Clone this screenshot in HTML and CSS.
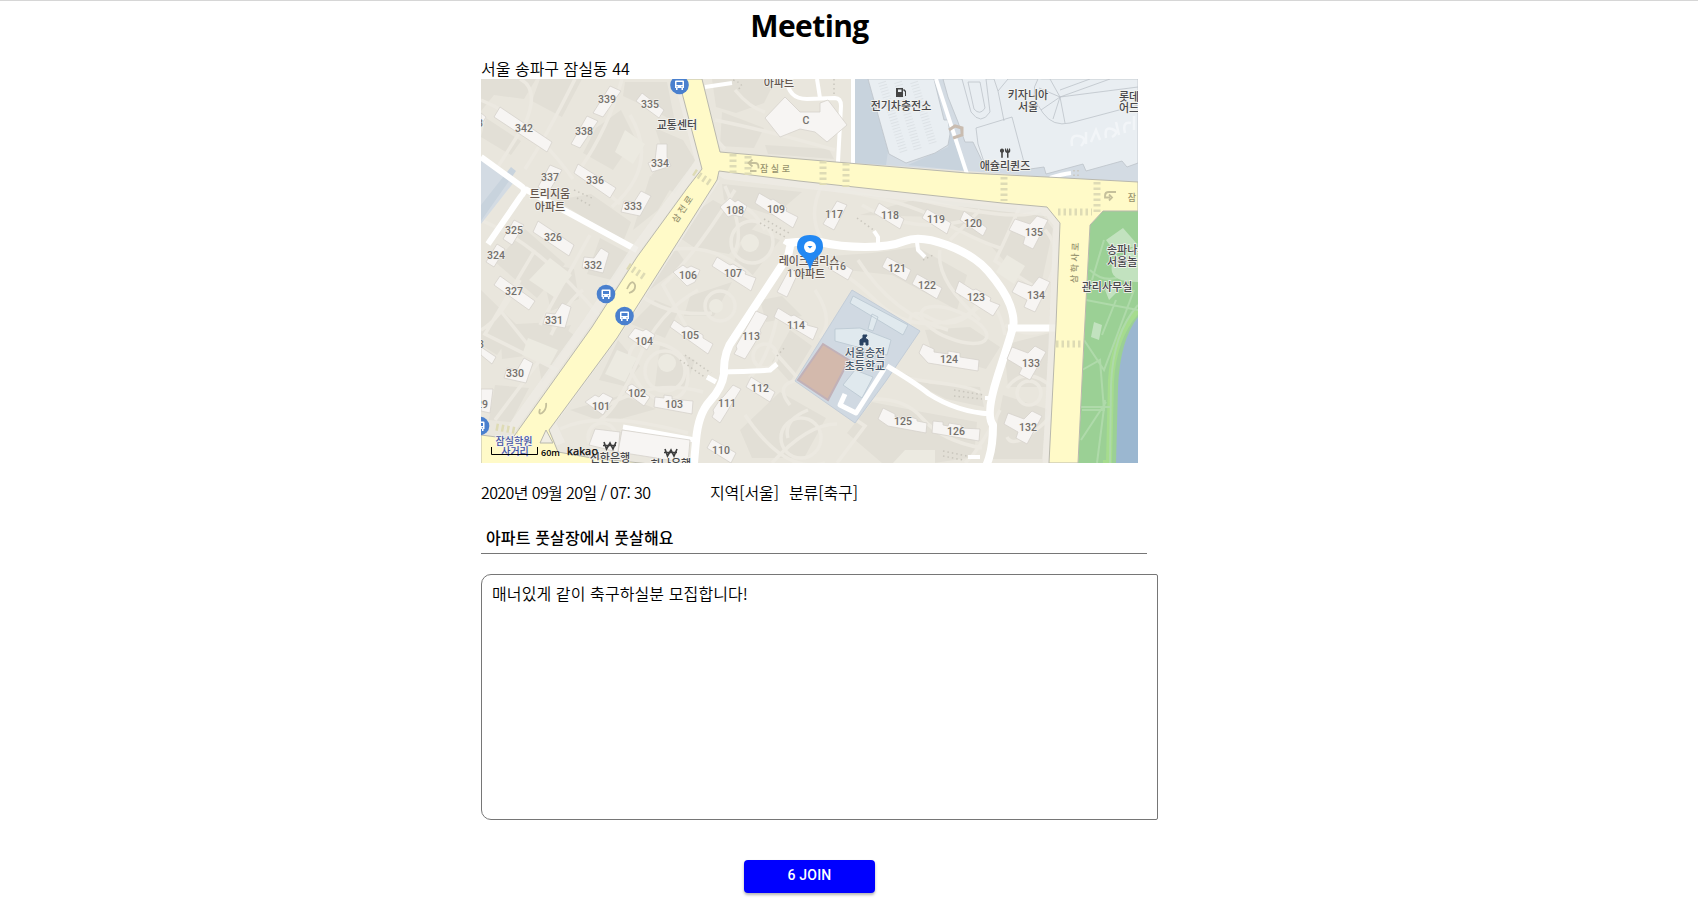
FILE: index.html
```html
<!DOCTYPE html>
<html lang="ko">
<head>
<meta charset="utf-8">
<title>Meeting</title>
<link rel="stylesheet" href="styles.css">
</head>
<body>
<main class="meeting">
  <h1 class="meeting-title">Meeting</h1>
  <p class="address">서울 송파구 잠실동 44</p>
  <svg class="map" viewBox="481 79 657 384" role="img" aria-label="지도">
    <rect class="ground" x="481" y="79" width="657" height="384"/>
    <!-- ground shading -->
    <g class="patch">
      <path d="M481 79h55l-12 20-30-4-13 16zM540 79h42l-20 38-30-16zM486 118l35 23-10 14-30-18zM596 128l25-18 14 28-22 32-30-17zM625 82h42l8 40-22-12-30-14zM655 128l28 12 12 20-20 34-24-18 14-18zM556 200l35-6 40 28-8 20zM650 176l22 10-14 24-25 20z"/>
      <path d="M495 262l30-33 40 35-28 34zM540 262l34 7 5 30-28 12zM600 238l30 16-18 26-25-6zM481 290l36 35-20 30-16-10zM500 325l54-3-14 32-38 5zM535 345l25-20 14 10-32 48zM495 385l34 3-18 34-22-2zM545 330l26-5-8 18zM668 230l45-30 44 24-28 30-34-6zM722 184l80 8-28 24-50-16zM640 268l32-25 14 20-38 28zM690 296l42-14-18 34-30 0zM655 300l24 10-14 28-34-14zM618 340l22 26-16 20-25-6zM660 345l35 15-10 30-30-4zM570 410l52-15 34 14-50 14z"/>
      <path d="M712 79h64l-12 24-28 10-20-6zM722 112l42 16-10 20-34-2zM765 145l64 4 5 10-66-5zM748 228l32 12-28 36-20-10zM760 300l22-4 20 20-36 6zM790 330l22 16-22 36-18-20zM740 430l40-38 46 26-22 40h-52zM860 215l60-17 120 13 13 18-15 70-48-54-52-28zM830 256l42-3 45-6 50 28-10 35-65-35-45-5zM925 330l45-3 30 20-14 22-54-16zM895 370l35 14 50 3 4 20-38-8-40-20zM872 402l50 10 55 10-3 35-40 6h-52l-35-30zM1004 345l46-12-4 54-38 0zM1003 395l44 14-5 50h-52z"/>
    </g>
    <g class="footpath">
      <path d="M481 100q50 20 92 79M520 79q20 10 5 45l-38 60M575 79q-30 60-50 90M622 79q-14 50-42 90l40 35M630 115q30 50-18 92M481 220q60 25 122 100M520 280q-20 40-39 50M535 250l-50 84 72 36M590 235l-50 90M500 310l40 50-45 60M583 290q-15 10-32 45M695 79q0 40 30 70M715 120q50 10 120 30M735 90q15 18 30 22"/>
      <path d="M735 190q-40 65-72 95l25 45M668 250q50-8 85 28M725 186q20 45 10 65M765 230q-20-35-42-23M698 290q-40 22-60 70t-38 60M640 295q30 22 72 18M628 365q0-30 30-22t30 32-22 25-38-35M603 408q50-30 100-16M560 429q40-20 128 4M745 415q40 60 80 48M777 318q-10 45-28 60M773 350l30 34 62 42-28 37M790 405q-20-25 20-26M837 424q-30 0-65 39M808 410q-25 10-20 28"/>
      <path d="M822 185q-15 30 0 55M835 190q70 10 105 30t60 28M862 205q50 30 105 15M900 195q120 30 140 15M980 210q-20 20-30 30M1020 206q-15 35-25 55l52 34M1045 230q20 20 0 60M815 260q30 10 60 40t70 22 30-30M815 290q20 30 5 48M858 260q35 55 90 70M940 250q-5 30 40 70M900 345q-25 30 25 36t55 12M862 400q40-5 60 18t60 30M910 330q-4-25 20-12t45-8 30 25M1007 388q16-22 40-5t-5 42-35 12M1000 410q-20 40-35 53M1005 325q25 15 48 2"/>
      <circle cx="752" cy="242" r="21"/><circle cx="720" cy="306" r="15"/><circle cx="765" cy="356" r="12"/><circle cx="665" cy="371" r="20"/><circle cx="602" cy="437" r="14"/><circle cx="1029" cy="393" r="12"/><circle cx="801" cy="438" r="20"/>
      <ellipse cx="954" cy="325" rx="35" ry="14" transform="rotate(22 954 325)"/>
    </g>
    <g class="knoll">
      <path d="M550 258l22 17-18 22-25-17zM528 338l30 12-8 15-28-10zM617 350l20 8-12 24-20-8zM1007 255l18 11-11 18-18-12zM905 450h30v13h-42zM625 130l20 14-12 20-18-12z"/>
      <circle cx="716" cy="306" r="7"/><circle cx="667" cy="363" r="9"/><circle cx="750" cy="243" r="9"/>
    </g>

    <!-- commercial district and station block on the left edge -->
    <path class="lot" d="M854 79h284v104l-90-6-194-14zM481 158l33 24-33 42z"/>
    <path class="lot-shade" d="M855 79h13l20 72-2 14-31-2zM935 153l13-6 2-16 16 40-58-6zM481 205l30-38 5 4-35 50z"/>
    <g class="mall">
      <path d="M868 79h66l10 41h4l2 14-2 11-13 8-29 10-17-9z"/>
      <path d="M943 79h195v84l-11 4-5-6-36 10-3-7-37 10-2-7-14 2-46-4-11-23-8 0-7-20-10-25z"/>
      <path d="M976 128l36-11 13 49-41-4-6-18z"/>
      <path d="M962 79l9 33q10 14 19 0l-4-33M968 82h12l5 26q-5 8-11 1zM994 79l4 12 10-12M998 91l6 30"/>
      <path d="M1038 79q-10 15 5 34 10 14 27 10l68-18M1060 97l-21-9M1060 97l-19 13M1060 97l-7 22M1060 97l5 26M1060 97l50-18M1060 97l78-10M1060 97l-10-18M1060 90l30-11"/>
    </g>
    <g class="stalls"><path d="M882 82l22 71M898 82l20 68M914 82l19 62"/></g>
    <path class="watermark" d="M1072 146q-2-12 7-10t2 10M1086 144v-12M1091 142l5-12 4 10M1106 138q-2-12 6-9t0 8M1119 135l-3-13M1125 133q-3-12 6-10M1134 130v-14"/>

    <!-- park and lake -->
    <path class="park" d="M1090 225l13-14h35v252h-60l6-123z"/>
    <path class="park-edge" d="M1138 310q-24 25-27 70l-2 83h-6"/>
    <g class="park-path"><path d="M1090 270q20 20 48-5M1086 300l52 10M1084 340l20 30 30-80M1082 370l18-10 4 50h-22M1081 440l25-38M1104 240l-12 40M1105 400l-8 63M1138 305q-25 28-27 80l-1 78M1080 407h30M1116 300l-14 35"/></g>
    <path class="park-plaza" d="M1106 240l17-12 14 16-18 14zM1112 265q-4 17 26 17v-35q-22-2-26 18zM1094 322l8 3-3 15-8-3zM1105 290l12-8 4 6-12 12z"/>
    <path class="lake" d="M1138 317q-18 23-20 70l-2 76h22z"/>

    <!-- school grounds -->
    <path class="school-lot" d="M852 290l68 41-34 50-31 42-60-42z"/>
    <path class="field" d="M823 344l26 16-21 40-30-20z"/>
    <g class="school"><path d="M853 296l55 29-5 10-53-32zM835 329l25-1 31 12-4 15-52-14zM855 370l18 7-11 21-19-13zM872 314l6 3-5 14-5-2z"/></g>

    <!-- local roads -->
    <g class="lane">
      <path d="M481 157l40 29q6 4 0 10l-33 48M525 189l112 61" stroke-width="6"/>
      <path d="M790 247l-2 9-54 82q-11 14-10 36-2 14-14 27t-14 40l-2 22" stroke-width="8"/>
      <path d="M724 372q38-1 46-2l7-6M716 382l-9-5M784 241l10 6M623 427l72 13" stroke-width="5"/>
      <path d="M786 243q15-2 34-1 20 5 45 5t40-6 42 4 41 26q17 20 22 34t3 22-15 48-5 50q0 20-4 33t-10 17" stroke-width="8"/>
      <path d="M1008 328h50" stroke-width="7"/>
      <path d="M878 246v-9l-4-6M917 242l1 8 7 7M985 398h8M968 457h12" stroke-width="4"/>
      <path d="M887 366q30 18 42 28 28 18 62 20" stroke-width="5"/>
      <path d="M884 369l-28 44-16-8 5-11" stroke-width="5"/>
      <path d="M936 79l31 95M787 79q1 20 20 20l28-1q6 0 6 8l-3 56M817 79l3 19M853 79v85" stroke-width="4"/>
      <path d="M705 87l27-4M1050 178q12-4 21-5" stroke-width="4"/>
    </g>
    <path class="gate" d="M949 130l6-4 7 2v7l-9 3"/>

    <!-- main roads -->
    <path class="verge" d="M680 86l20 76-15 20-50 68-46 70-80 112M712 166l14 9 78 9 200 23 45 5 9 12-5 120-6 119M716 178l-99 154-66 90 10 22"/>
    <g class="avenue">
      <path d="M683 79h19l18 73 80 7 167 14 80 4 91 5v29h-35l-13 14-6 115-6 123h-29l7-138 4-102-13-16-45-4-203-22-80-10-2 9-100 158-68 92 9 22 34 6 58 6v6H481v-35l31 4 80-112 45-70 51-70 14-18-21-80z"/>
      <path class="island" d="M546 430l-6 13h13z"/>
    </g>
    <g class="crosswalk">
      <path d="M733 154v19M748 156v19M823 161v24M846 163v24M1004 177v24M1097 182v30"/>
      <path d="M1058 212h34M1056 344h26M694 172l18 12M628 266l18 12M496 427l22 4"/>
    </g>
    <g class="uturn">
      <path id="uturn" d="M750 171h6.500M749 163h6q3.500 0 3.500 4v1.500M752.500 159.500l-4 3.500 4 3.500"/>
      <path d="M627 289q5-11 8-4 1 6-6 8M540 409q-2 6 2 4 5-4 4-10M1106 194l-1 1M1116 192h-7q-4 0-4 3.500v2h5M1109 194.500l3 3-3 3"/>
    </g>

    <!-- buildings -->
    <g class="building">
      <path d="M593 113l17-27 11 5-18 26zM571 144l16-28 11 5-18 27zM500 107l52 35-5 10-53-35zM642 93l22 17-5 8-23-17zM657 144h10v13l4 9-19 6-4-9 7-3zM550 165l12 5-14 23-10-6zM578 164l38 24-6 10-36-25z"/>
      <path d="M514 220l10 5-12 20-9-6zM538 221l36 24-5 11-36-24zM497 244l8 5-11 18-8-5zM641 191l10 5-11 20-19-4 3-11 10 1zM601 248l8 5-6 20-21-5 2-11 10 1zM500 276l35 25-6 9-35-25zM562 303l9 4-6 21-22-4 3-11 9 1z"/>
      <path d="M720 207l10-9 5 4 3-2 9 6-5 11-9-2-5 2zM759 193l12 7 2-1 14 9-1 3 12 6-5 11-38-25zM673 272l10-7 4 3 4-2 9 4-5 12-8 4zM717 257l13 8 3-1 13 8-1 2 11 4-5 13-39-25zM790 268l8 5-11 24-10-5zM670 327l4-7 10 7 4-1 15 9v3l10 6-5 10zM628 337l7-9 8 3 3-2 9 6-8 15zM778 308l13 8 3-1 14 8-1 2 11 3-5 12-39-23zM756 311l12 5-8 14 1 3-16 26-11-5 3-5-1-3z"/>
      <path d="M524 358l9 5-7 20-22-5 3-10 10 2zM481 347l15 10-4 7-11-9zM481 389h12l-3 24-9-2zM481 113l5 4-5 8zM632 384l18 13-6 9-19-14 3-3v-3zM585 402l10-7 4 2 4-4 10 5-10 17zM655 397l9 1v-3l8 1v3l21 2-1 13-38-7zM751 377l24 15-5 10-24-15zM733 385l8 4-21 34-8-6 2-4-1-3 8-12 2-1zM712 439l24 14-5 10-24-15z"/>
      <path d="M837 201l10 4-13 25-11-6zM879 203l25 16-4 10-26-16zM927 209l24 14-4 11-25-16zM964 211l23 17-4 8-23-16zM1015 219l15 5 7-8 11 4-15 29-10-5 2-7-16-7zM1018 281l14 5 7-9 11 5-15 30-11-5 3-7-15-8zM1012 347l16 6 7-7 11 6-16 28-11-6 3-6-15-9zM1008 413l16 6 8-8 10 5-15 28-11-6 2-6-14-8z"/>
      <path d="M887 257l24 13-5 11-24-14zM917 274l25 14-5 11-25-15zM959 281l14 9 3-1 15 9-1 3 10 4-7 11-38-24zM837 260l16 10-5 10-20-12zM923 344l11 5v3l14 2v-3l12 2v4l19 3-1 11-50-8-9-10zM883 408l12 6v3l11 2 1-3 10 3v2l10 2-1 10-38-7-10-7zM933 421l10 1v3l5 1 1-3 12 2v3l19 1-1 12-47-8z"/>
      <path d="M785 97l15 15h20v-9l8-3 19 25-20 17-12-10-15-3-20 8-15-19zM622 430l68 10-2 23-70-11zM595 429l25 3-2 20-29-7z"/>
    </g>
    <g class="steps"><path d="M733 80q14 5 5 9M574 190l18 8M577 198l14 8M760 223l25 14M764 219l25 14M857 218l18 13M923 260l10-5M680 360l26 18M685 355l26 18M777 356l8-9M954 390l30 5M954 396l28 3M943 451l24 5M943 456l20 4M834 79v16M1074 170v8M1078 170v8"/></g>

    <g class="number">
      <text x="607" y="103">339</text><text x="650" y="108">335</text><text x="524" y="132">342</text><text x="584" y="135">338</text><text x="660" y="167">334</text><text x="550" y="181">337</text><text x="595" y="184">336</text><text x="633" y="210">333</text>
      <text x="514" y="234">325</text><text x="553" y="241">326</text><text x="496" y="259">324</text><text x="593" y="269">332</text><text x="514" y="295">327</text><text x="554" y="324">331</text><text x="515" y="377">330</text><text x="481" y="348">3</text><text x="482" y="408">29</text><text x="480" y="127">3</text>
      <text x="735" y="214">108</text><text x="776" y="213">109</text><text x="688" y="279">106</text><text x="733" y="277">107</text><text x="796" y="277">115</text><text x="690" y="339">105</text><text x="644" y="345">104</text><text x="796" y="329">114</text><text x="751" y="340">113</text><text x="637" y="397">102</text><text x="601" y="410">101</text><text x="674" y="408">103</text><text x="760" y="392">112</text><text x="727" y="407">111</text><text x="721" y="454">110</text>
      <text x="834" y="218">117</text><text x="890" y="219">118</text><text x="936" y="223">119</text><text x="973" y="227">120</text><text x="1034" y="236">135</text><text x="1036" y="299">134</text><text x="1031" y="367">133</text><text x="1028" y="431">132</text><text x="897" y="272">121</text><text x="927" y="289">122</text><text x="976" y="301">123</text><text x="837" y="270">116</text><text x="949" y="363">124</text><text x="903" y="425">125</text><text x="956" y="435">126</text><text x="806" y="124">C</text>
    </g>
    <g class="road-name">
      <text x="775" y="172">잠 실 로</text><text transform="translate(685 211) rotate(-56)">삼 전 로</text><text transform="translate(1078 263) rotate(-88)">삼 학 사 로</text><text x="1132" y="201">잠</text>
    </g>
    <g class="place">
      <text class="complex" x="779" y="87">아파트</text><text class="complex" x="550" y="198">트리지움</text><text class="complex" x="550" y="211">아파트</text><text class="complex" x="809" y="265">레이크팰리스</text><text class="complex" x="810" y="278">아파트</text>
      <text x="677" y="129">교통센터</text><text x="901" y="110">전기차충전소</text><text x="1028" y="99">키자니아</text><text x="1028" y="111">서울</text><text x="1005" y="170">애슐리퀸즈</text>
      <g class="from-left"><text x="1119" y="101">롯데월드</text><text x="1119" y="112">어드벤처</text><text x="1107" y="254">송파나루</text><text x="1107" y="266">서울놀이</text></g>
      <text x="1107" y="291">관리사무실</text>
      <text class="school-name" x="865" y="357">서울송전</text><text class="school-name" x="865" y="370">초등학교</text>
      <text class="crossing" x="514" y="445">잠실학원</text><text class="crossing" x="515" y="455">사거리</text>
      <text x="610" y="462">신한은행</text><text x="671" y="468">하나은행</text>
    </g>
    <g class="glyph">
      <path d="M897 88h6v9h-7v-9zM903 90l2 2v4h1v-5l-2-2"/><path class="glyph-gap" d="M898 89.500h3.500v2.500h-3.500z"/>
      <path d="M1002 148.500a2.200 2.200 0 0 1 .8 4.200v5h-1.600v-5a2.200 2.200 0 0 1 .8-4.200zM1005 148.500h1l.5 2h.5v-2h1v2h.5l.5-2h1q1 4-1.500 4.500v4.700h-1.500v-4.700q-2.500-.5-2-4.500z"/>
      <path class="school-icon" d="M860 345v-5l3-2v-3h4l-1 2-1 1 3 2v5h-2v-3h-3v3z"/>
      <g class="won"><path d="M604 442l2.500 7 3.500-6 3 6 3-7M603 445.500h13"/><path d="M665 449l2.500 7 3.500-6 3 6 3-7M664 452.500h13"/></g>
    </g>

    <!-- bus stops -->
    <defs>
      <g id="bus">
        <circle class="bus-disc" r="9.300"/>
        <path class="bus-body" d="M-3.500-4.500h7q1 0 1 1v6.500h-1v2h-1.500v-2h-4v2h-1.500v-2h-1v-6.500q0-1 1-1z"/>
        <path class="bus-window" d="M-3-3h6v3h-6zM-3 1.200h1.200v1h-1.200zM1.800 1.200h1.200v1h-1.200z"/>
      </g>
    </defs>
    <use href="#bus" x="679.500" y="85"/><use href="#bus" x="606" y="294"/><use href="#bus" x="624.500" y="316"/><use href="#bus" x="480" y="426"/>

    <!-- marker -->
    <path class="pin" d="M810 271q-2-10-8-15-5-4-5-9 0-12 13-12t13 12q0 5-5 9-6 5-8 15z"/>
    <circle class="pin-eye" cx="810" cy="247" r="6"/>
    <path class="pin-mark" d="M807.500 246h5l-2.500 2.500z"/>

    <!-- scale bar -->
    <path class="scale" d="M491.500 447v7.500h46v-7.500"/>
    <text class="scale-label" x="541" y="456">60m</text>
    <text class="brand" x="567" y="455" textLength="31">kakao</text>
  </svg>
  <div class="details">
    <span class="date">2020년 09월 20일 / 07: 30</span>
    <span class="region">지역[서울]</span>
    <span class="category">분류[축구]</span>
  </div>
  <h2 class="subject">아파트 풋살장에서 풋살해요</h2>
  <div class="description">매너있게 같이 축구하실분 모집합니다!</div>
  <button class="join" type="button">6 JOIN</button>
</main>
</body>
</html>
```
FILE: styles.css
```css
* { box-sizing: border-box; }
body {
  margin: 0;
  height: 900px;
  overflow: hidden;
  border-top: 1px solid #d6d6d6;
  background: #fff;
  color: #000;
  font: 350 16px/21px "Noto Sans CJK KR", sans-serif;
}
.meeting { width: 657px; margin-left: 481px; display: flex; flex-direction: column; }
.meeting-title {
  margin: 3px 0 0;
  height: 44px;
  text-align: center;
  font: bold 30px/43px "Open Sans", sans-serif;
  letter-spacing: -0.6px;
}
.address { margin: 10px 0 0; height: 21px; white-space: nowrap; }
.map { display: block; width: 657px; height: 384px; }
.details { display: flex; margin-top: 19px; height: 21px; white-space: nowrap; }
.date { width: 229px; letter-spacing: -0.6px; }
.region { width: 79px; letter-spacing: -0.1px; }
.category { letter-spacing: -0.1px; }
.subject {
  width: 666px;
  height: 33px;
  margin: 18px 0 0;
  padding: 6px 5px 0;
  border-bottom: 1px solid #767676;
  font-size: 16px;
  line-height: 21px;
  font-weight: 500;
  letter-spacing: 0.15px;
}
.description {
  width: 677px;
  height: 246px;
  margin-top: 20px;
  padding: 8px 10px;
  border: 1px solid #767676;
  border-radius: 10px 2px 2px 10px;
  letter-spacing: 0.1px;
}
.join {
  align-self: center;
  width: 131px;
  height: 33px;
  margin-top: 40px;
  padding: 0 0 3px;
  border: 0;
  border-radius: 4px;
  background: #00f;
  color: #fff;
  font: 500 14px/24px Roboto, sans-serif;
  letter-spacing: 0.2px;
  box-shadow: 0 2px 3px rgba(0, 0, 0, 0.3);
}

/* map */
.ground { fill: #e9e6dd; }
.patch { fill: #e2dfd6; }
.footpath { fill: none; stroke: #ece9e1; stroke-width: 3.5; }
.knoll { fill: #eceae1; }
.lot { fill: #d3dbe3; }
.lot-shade { fill: #c8d3dd; }
.mall { fill: #e9eef2; stroke: #bcc3c9; stroke-width: 0.8; }
.stalls { fill: none; stroke: #dde2e6; stroke-width: 8; stroke-dasharray: 1 2; }
.watermark { fill: none; stroke: #f2f5f8; stroke-width: 2.5; }
.park { fill: #9bd095; }
.park-edge { fill: none; stroke: #a6dc8e; stroke-width: 6; }
.park-path { fill: none; stroke: #afdaaa; stroke-width: 2; }
.park-plaza { fill: #c2e2bf; }
.lake { fill: #9bb7d0; }
.lane { fill: none; stroke: #fff; stroke-linejoin: round; }
.gate { fill: none; stroke: #c9bcb0; stroke-width: 3; }
.verge { fill: none; stroke: #eeebe5; stroke-width: 9; stroke-opacity: 0.8; }
.avenue { fill: #fffac8; stroke: #b9b8ad; stroke-width: 1; }
.island { fill: #f0ede4; }
.crosswalk { fill: none; stroke: #dedbb5; stroke-width: 7; stroke-dasharray: 2.5 3; }
.uturn { fill: none; stroke: #c5c09b; stroke-width: 1.8; }
.school-lot { fill: #d0d9e2; stroke: #c3cdd8; }
.field { fill: #d3b9ac; stroke: #c1b1b8; stroke-width: 2; }
.school { fill: #e0e9ee; stroke: #b9c6d1; stroke-width: 0.8; }
.building { fill: #f7f5f3; stroke: #d6d2cc; stroke-width: 0.8; }
.steps { fill: none; stroke: #c9c6bd; stroke-width: 1.5; stroke-dasharray: 1.5 3; }
.number { fill: #74706c; font: 500 10.5px "Roboto", sans-serif; text-anchor: middle; stroke: #f5f3ef; stroke-width: 1px; paint-order: stroke; }
.road-name { fill: #97936e; font: 500 9px "Noto Sans CJK KR", sans-serif; text-anchor: middle; }
.place { fill: #47474a; font: 500 11px "Noto Sans CJK KR", sans-serif; text-anchor: middle; stroke: #f4f4f0; stroke-width: 1.5px; paint-order: stroke; }
.complex { fill: #65574f; }
.from-left { text-anchor: start; }
.school-name { fill: #46566a; }
.crossing { fill: #4453a0; font-size: 10px; }
.glyph { fill: #444; }
.glyph-gap { fill: #e9eef2; }
.school-icon { fill: #294263; stroke: #294263; }
.won { fill: none; stroke: #3d3d3d; stroke-width: 1.6; }
.bus-disc { fill: #4a80ce; }
.bus-body { fill: #fff; }
.bus-window { fill: #4a80ce; }
.pin { fill: #2288f3; }
.pin-eye { fill: #fff; }
.pin-mark { fill: #2288f3; }
.scale { fill: none; stroke: #000; stroke-width: 1; }
.scale-label { font: 600 9px "Open Sans", sans-serif; }
.brand { font: 500 11px "Open Sans", sans-serif; stroke: #000; stroke-width: 0.25px; }
```
